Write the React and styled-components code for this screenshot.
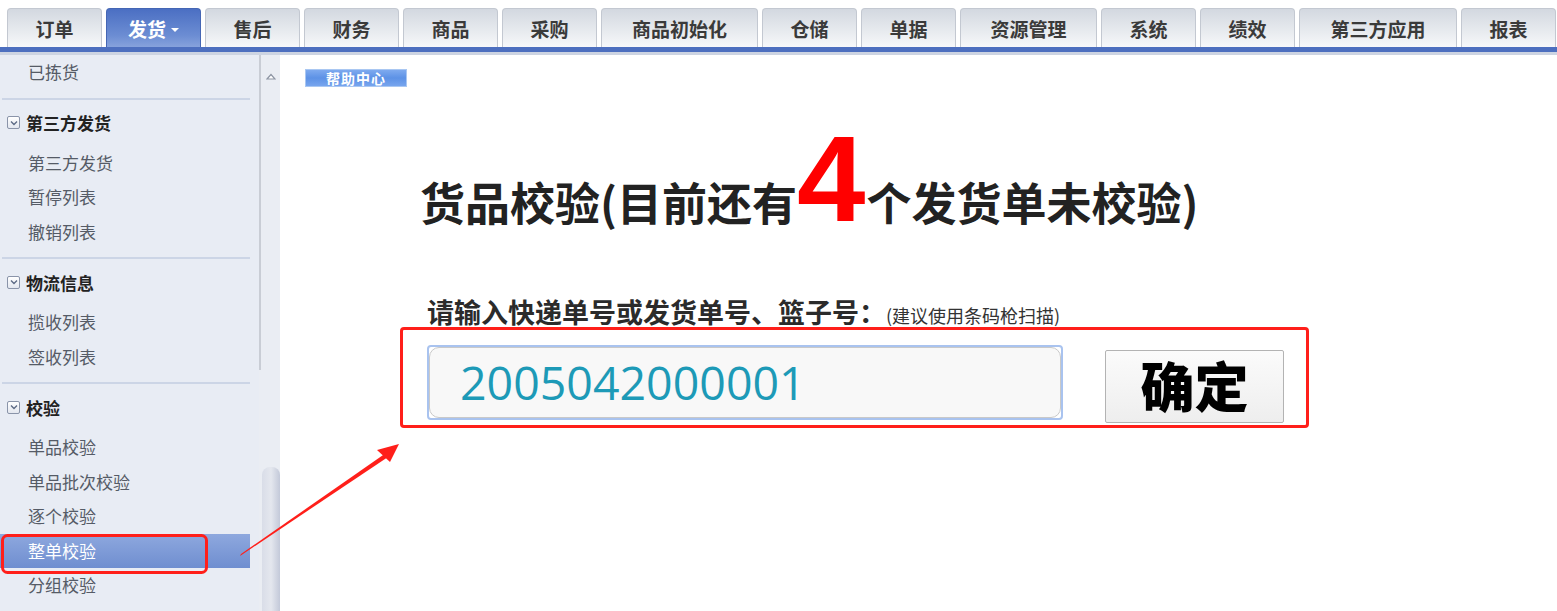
import React from "react";
import styled, { createGlobalStyle } from "styled-components";

const GlobalStyle = createGlobalStyle`
  html, body {
    margin: 0;
    padding: 0;
    background: #fff;
    overflow: hidden;
  }
  body {
    font-family: "Noto Sans CJK SC", "Liberation Sans", sans-serif;
  }
`;

const tabs = [
  { label: "订单", w: 95 },
  { label: "发货", w: 95, active: true },
  { label: "售后", w: 95 },
  { label: "财务", w: 95 },
  { label: "商品", w: 95 },
  { label: "采购", w: 95 },
  { label: "商品初始化", w: 157 },
  { label: "仓储", w: 95 },
  { label: "单据", w: 95 },
  { label: "资源管理", w: 137 },
  { label: "系统", w: 95 },
  { label: "绩效", w: 95 },
  { label: "第三方应用", w: 158 },
  { label: "报表", w: 95 },
];

const groups = [
  { title: null, items: ["已拣货"] },
  { title: "第三方发货", items: ["第三方发货", "暂停列表", "撤销列表"] },
  { title: "物流信息", items: ["揽收列表", "签收列表"] },
  {
    title: "校验",
    items: ["单品校验", "单品批次校验", "逐个校验", "整单校验", "分组校验"],
    selected: "整单校验",
  },
];

const App = () => {
  return (
    <Page>
      <GlobalStyle />
      <TabBar>
        {tabs.map((t) => (
          <Tab key={t.label} $w={t.w} $active={t.active}>
            {t.label}
            {t.active && <Caret />}
          </Tab>
        ))}
      </TabBar>
      <BlueLine />
      <Body>
        <Sidebar>
          <Menu>
            {groups.map((g, i) => (
              <Group key={i} $first={i === 0}>
                {g.title && (
                  <GroupHead>
                    <Toggle>
                      <svg width="8" height="6" viewBox="0 0 8 6">
                        <path d="M1 1.5 L4 4.5 L7 1.5" fill="none" stroke="#5d6b86" strokeWidth="1.4" />
                      </svg>
                    </Toggle>
                    {g.title}
                  </GroupHead>
                )}
                {g.items.map((it) => (
                  <Item key={it} $selected={g.selected === it}>
                    {it}
                  </Item>
                ))}
              </Group>
            ))}
          </Menu>
          <ScrollCol>
            <Rail />
            <Track>
              <UpArrow>
                <svg width="10" height="7" viewBox="0 0 10 7">
                  <path d="M1 6 L5 1.5 L9 6 Z" fill="#fff" stroke="#8d95a3" strokeWidth="1.2" />
                </svg>
              </UpArrow>
              <Thumb />
            </Track>
          </ScrollCol>
        </Sidebar>
        <Main>
          <HelpButton>帮助中心</HelpButton>
          <Title>
            货品校验(目前还有<Count>4</Count>个发货单未校验)
          </Title>
          <Label>
            请输入快递单号或发货单号、篮子号：<Hint>(建议使用条码枪扫描)</Hint>
          </Label>
          <ScanBox>
            <InputFrame>
              <ScanInput defaultValue="2005042000001" readOnly />
            </InputFrame>
            <OkButton>确定</OkButton>
          </ScanBox>
        </Main>
      </Body>
      <Overlay width="1557" height="611" viewBox="0 0 1557 611">
        <rect x="2.5" y="535.5" width="204" height="37" rx="5" fill="none" stroke="#ff1f1a" strokeWidth="3" />
        <polygon points="240,556 241,554 386,453 388,457" fill="#ff1f1a" />
        <polygon points="399,444 377,450 390,462" fill="#ff1f1a" />
      </Overlay>
    </Page>
  );
};

export default App;

const Page = styled.div`
  position: relative;
  width: 1557px;
  height: 611px;
  overflow: hidden;
  background: #fff;
`;

const TabBar = styled.div`
  display: flex;
  gap: 4px;
  height: 39px;
  padding: 8px 0 0 7px;
`;

const Tab = styled.div`
  width: ${(p) => p.$w}px;
  flex-shrink: 0;
  box-sizing: border-box;
  display: flex;
  align-items: center;
  justify-content: center;
  gap: 5px;
  border: 1px solid ${(p) => (p.$active ? "#4566b4" : "#c3c8d1")};
  border-bottom: none;
  border-radius: 4px 4px 0 0;
  background: ${(p) =>
    p.$active
      ? "linear-gradient(#4b6fc3, #6c8dd3 70%, #86a2dc)"
      : "linear-gradient(#d3d8e0, #e8ebef 60%, #f7f8fa)"};
  color: ${(p) => (p.$active ? "#fff" : "#3a3a3a")};
  font-size: 19px;
  font-weight: 700;
  padding-top: 1px;
`;

const Caret = styled.span`
  width: 0;
  height: 0;
  border-left: 4px solid transparent;
  border-right: 4px solid transparent;
  border-top: 4px solid #fff;
  margin-top: 2px;
`;

const BlueLine = styled.div`
  height: 5px;
  background: #4d6fbf;
  border-bottom: 3px solid #cdd4e2;
`;

const Body = styled.div`
  display: flex;
  height: 556px;
`;

const Sidebar = styled.div`
  display: flex;
  width: 280px;
  flex-shrink: 0;
  background: #e8ecf4;
`;

const Menu = styled.div`
  width: 259px;
  padding-right: 9px;
  box-sizing: border-box;
`;

const Group = styled.div`
  border-top: ${(p) => (p.$first ? "none" : "2px solid #ccd5e6")};
  margin: ${(p) => (p.$first ? "0" : "7px 0 0 2px")};
  padding-bottom: 1px;
`;

const GroupHead = styled.div`
  display: flex;
  align-items: center;
  gap: 6px;
  height: 34px;
  margin: 6px 0 6px 5px;
  font-size: 17px;
  font-weight: 700;
  color: #222;
`;

const Toggle = styled.span`
  width: 13px;
  height: 13px;
  box-sizing: border-box;
  border: 1px solid #8a94a9;
  border-radius: 2px;
  background: linear-gradient(#ffffff, #e3e7ef);
  display: flex;
  align-items: center;
  justify-content: center;
`;

const Item = styled.div`
  height: 34.5px;
  line-height: 34.5px;
  padding-left: 28px;
  font-size: 17px;
  color: ${(p) => (p.$selected ? "#fff" : "#555b66")};
  background: ${(p) =>
    p.$selected ? "linear-gradient(#8ea8de, #6f8ed0)" : "transparent"};
  ${Group}:not(:first-child) & {
    margin-left: -2px;
  }
`;

const ScrollCol = styled.div`
  display: flex;
  width: 21px;
  background: #eaedf3;
`;

const Rail = styled.div`
  width: 2px;
  height: 315px;
  background: #c9cdd5;
  flex-shrink: 0;
`;

const Track = styled.div`
  flex: 1;
  display: flex;
  flex-direction: column;
  align-items: center;
`;

const UpArrow = styled.div`
  margin-top: 18px;
  display: flex;
`;

const Thumb = styled.div`
  margin-top: auto;
  width: 18px;
  height: 144px;
  border-radius: 8px 8px 0 0;
  background: linear-gradient(90deg, #d9dde8, #e4e7ee 50%, #c3c9d9);
`;

const Main = styled.div`
  flex: 1;
  padding: 14px 0 0 25px;
`;

const HelpButton = styled.div`
  width: 102px;
  height: 18px;
  box-sizing: border-box;
  border: 1px solid #a9c7f2;
  background: linear-gradient(#7eaaef, #5d92e6 50%, #77a5ee);
  color: #fff;
  font-size: 14px;
  font-weight: 700;
  line-height: 16px;
  text-align: center;
  letter-spacing: 1px;
`;

const Title = styled.div`
  display: flex;
  align-items: baseline;
  margin: 30px 0 0 115px;
  font-size: 45px;
  font-weight: 700;
  color: #222;
  line-height: 1;
`;

const Count = styled.span`
  font-family: "Liberation Sans", Arial, sans-serif;
  font-size: 123px;
  font-weight: 700;
  color: #ff0000;
  line-height: 1;
  margin: 0 1px 0 0;
`;

const Label = styled.div`
  display: flex;
  align-items: baseline;
  margin: 57px 0 0 122px;
  height: 30px;
  line-height: 30px;
  font-size: 27px;
  font-weight: 700;
  color: #2b2b2b;
`;

const Hint = styled.span`
  font-size: 18px;
  font-weight: 400;
  color: #333;
`;

const ScanBox = styled.div`
  display: flex;
  align-items: flex-start;
  gap: 42px;
  width: 909px;
  height: 101px;
  box-sizing: border-box;
  margin-left: 95px;
  padding: 15px 22px 0 24px;
  border: 3px solid #ff1f1a;
  border-radius: 4px;
`;

const InputFrame = styled.div`
  width: 636px;
  height: 75px;
  box-sizing: border-box;
  border: 2px solid #a9c3ef;
  border-radius: 4px;
  display: flex;
`;

const ScanInput = styled.input`
  flex: 1;
  min-width: 0;
  box-sizing: border-box;
  border: 1px solid #c9c9c9;
  border-radius: 10px;
  background: #f8f8f8;
  padding: 0 0 2px 30px;
  font-family: "Open Sans", "Liberation Sans", sans-serif;
  font-size: 46.5px;
  color: #1d9ab7;
  outline: none;
`;

const OkButton = styled.div`
  width: 179px;
  height: 73px;
  margin-top: 5px;
  box-sizing: border-box;
  border: 1px solid #b3b3b3;
  border-radius: 2px;
  background: linear-gradient(#fbfbfb, #eeeeee);
  display: flex;
  align-items: center;
  justify-content: center;
  font-size: 54px;
  font-weight: 900;
  color: #000;
  padding-bottom: 4px;
`;

const Overlay = styled.svg`
  position: absolute;
  left: 0;
  top: 0;
  pointer-events: none;
`;
